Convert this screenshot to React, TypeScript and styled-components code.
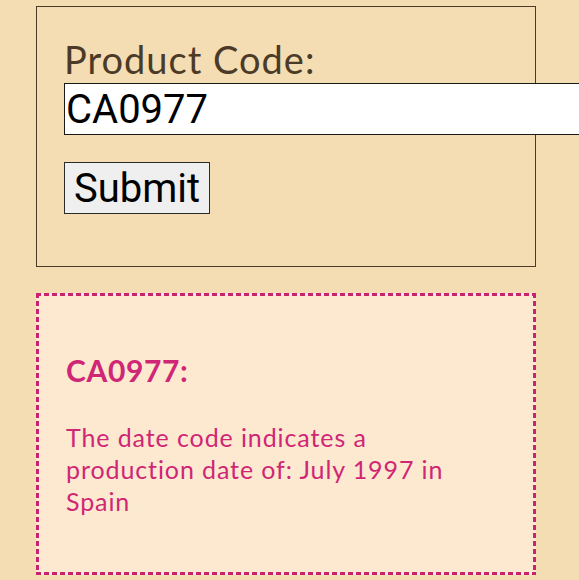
import styled, { createGlobalStyle } from 'styled-components'

const GlobalStyle = createGlobalStyle`
  html, body {
    margin: 0;
    padding: 0;
    background-color: #f4ddb3;
    overflow: hidden;
  }
  body {
    font-family: Lato, "Open Sans", sans-serif;
  }
`

export default function App() {
  return (
    <Page>
      <GlobalStyle />
      <FormCard>
        <Label htmlFor="code">Product Code:</Label>
        <CodeInput id="code" defaultValue="CA0977" />
        <SubmitButton type="button">Submit</SubmitButton>
      </FormCard>
      <ResultCard>
        <ResultTitle>CA0977:</ResultTitle>
        <ResultText>
          The date code indicates a production date of: July 1997 in Spain
        </ResultText>
      </ResultCard>
    </Page>
  )
}

const pink = '#c9226f'

const Page = styled.div`
  padding: 6px 0 0 36px;
  display: flex;
  flex-direction: column;
  gap: 26px;
  width: 500px;
`

const FormCard = styled.form`
  border: 1px solid #4a3a28;
  padding: 29px 27px 52px;
  display: flex;
  flex-direction: column;
  align-items: flex-start;
`

const Label = styled.label`
  font-family: Lato, sans-serif;
  font-size: 38px;
  line-height: 46px;
  letter-spacing: 1px;
  color: #4b3a27;
`

const CodeInput = styled.input`
  box-sizing: border-box;
  width: 540px;
  height: 52px;
  margin: 1px 0 27px;
  padding: 0 1px;
  border: 1px solid #1a1a1a;
  background: #fff;
  font-family: Roboto, sans-serif;
  font-size: 40px;
  color: #000;
  outline: none;
`

const SubmitButton = styled.button`
  box-sizing: border-box;
  height: 52px;
  padding: 0 9px;
  border: 1px solid #2a2a2a;
  border-radius: 0;
  background: #efefef;
  font-family: Roboto, sans-serif;
  font-size: 40px;
  color: #000;
`

const ResultCard = styled.div`
  box-sizing: border-box;
  height: 282px;
  padding: 57px 30px 0;
  color: #cf2675;
  background:
    repeating-linear-gradient(90deg, ${pink} 0 5px, transparent 5px 8px) top left / 100% 3px no-repeat,
    repeating-linear-gradient(90deg, ${pink} 0 5px, transparent 5px 8px) bottom left / 100% 3px no-repeat,
    repeating-linear-gradient(180deg, ${pink} 0 5px, transparent 5px 8px) top left / 3px 100% no-repeat,
    repeating-linear-gradient(180deg, ${pink} 0 5px, transparent 5px 8px) top right / 3px 100% no-repeat,
    #fde9d0;
`

const ResultTitle = styled.h2`
  margin: 0 0 31px;
  font-family: Lato, sans-serif;
  font-size: 30px;
  font-weight: 700;
  line-height: 40px;
  letter-spacing: 0.6px;
`

const ResultText = styled.p`
  margin: 0;
  font-family: Lato, sans-serif;
  font-size: 25px;
  line-height: 32px;
  letter-spacing: 0.9px;
  max-width: 420px;
`
